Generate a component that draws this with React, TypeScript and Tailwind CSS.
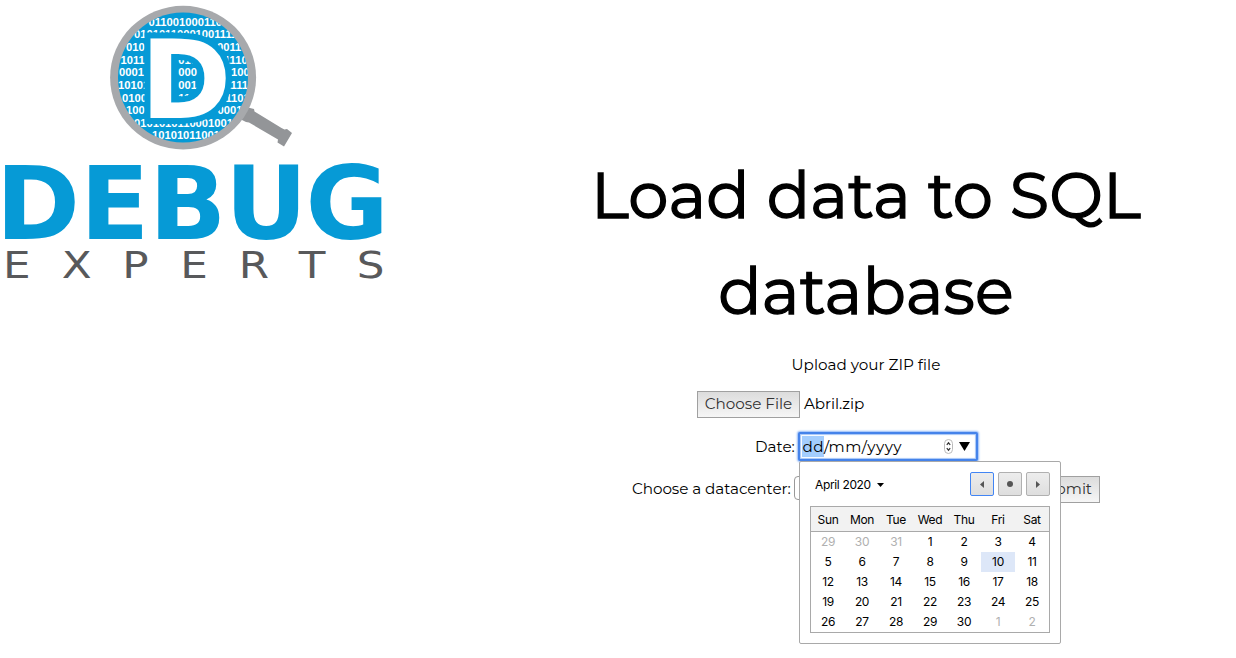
import React from "react";

const BODY = "font-['Montserrat','Inter',sans-serif]";

const BITS: [number, number, string][] = [
  [148.5, 25.5, "01100100011011"],
  [134, 38, "01010110001001111"],
  [126, 51, "010"],
  [120.5, 63.5, "1011"],
  [119, 76, "0001"],
  [118, 88.5, "10101"],
  [122, 101.5, "0100"],
  [126, 114, "100"],
  [134, 126.5, "010101011000100110"],
  [152, 139, "101010110010"],
  [178.3, 63.5, "010"],
  [178.3, 76, "000"],
  [178.3, 88.5, "001"],
  [178.3, 101.5, "110"],
  [217, 51, "0011"],
  [224, 63.5, "1110"],
  [231, 76, "1001"],
  [225, 88.5, "1111"],
  [225.5, 101.5, "1101"],
  [217.5, 114, "00010"],
];

function Logo() {
  return (
    <svg width="386" height="290" viewBox="0 0 386 290" role="img" aria-label="Debug Experts">
      <defs>
        <clipPath id="lens">
          <circle cx="183" cy="77.5" r="65" />
        </clipPath>
      </defs>
      <path d="M246 107 L254 109 L254.5 111.5 L281.5 128 L284.5 129.5 L287 129 L292 133 L284 146.5 L277.5 142.5 L278 139.5 L249 122.5 L246 122 L240 119 Z" fill="#939598" />
      <ellipse cx="183.1" cy="77.6" rx="73" ry="71.8" fill="#a7a9ac" />
      <circle cx="183" cy="77.5" r="65" fill="#069ad6" />
      <g
        clipPath="url(#lens)"
        fill="#fff"
        fontFamily="'Liberation Sans', sans-serif"
        fontWeight="700"
        fontSize="11.2"
      >
        {BITS.map(([x, y, s]) => (
          <text key={`${x}-${y}`} x={x} y={y}>
            {s}
          </text>
        ))}
      </g>
      <text
        x="140.5"
        y="118"
        fontFamily="'DejaVu Sans', sans-serif"
        fontWeight="700"
        fontSize="109.5"
        fill="#fff"
        stroke="#069ad6"
        strokeWidth="12"
        paintOrder="stroke"
      >
        D
      </text>
      <text
        x="-4.2 79.9 149 225 305.5"
        y="238.9"
        fontFamily="'DejaVu Sans', sans-serif"
        fontWeight="700"
        fontSize="101.5"
        fill="#069ad6"
      >
        DEBUG
      </text>
      <text
        transform="scale(1.15 1)"
        x="2.6 53.7 106.3 156.8 207.7 259.8 310.2"
        y="278.4"
        fontFamily="'DejaVu Sans', sans-serif"
        fontSize="38"
        fill="#58595b"
      >
        EXPERTS
      </text>
    </svg>
  );
}

const DAYS = ["Sun", "Mon", "Tue", "Wed", "Thu", "Fri", "Sat"];
const DATES = [
  29, 30, 31, 1, 2, 3, 4, 5, 6, 7, 8, 9, 10, 11, 12, 13, 14, 15, 16, 17, 18, 19, 20, 21, 22, 23, 24, 25, 26, 27,
  28, 29, 30, 1, 2,
];

function Calendar() {
  const nav = "flex h-6 w-6 items-center justify-center rounded-[2px] border bg-linear-to-b from-[#ededed] to-[#dedede]";
  return (
    <div className="absolute left-[1px] top-[29px] z-10 h-[183px] w-[262px] rounded-[2px] border border-[#a9a9a9] bg-white px-[10px] pt-[10px] font-['Inter',sans-serif] text-[12px] tracking-[-0.35px] text-black">
      <div className="flex h-6 items-center justify-between pl-[5px]">
        <div className="flex items-center gap-[6px] pt-px">
          <span>April 2020</span>
          <svg width="7" height="4" viewBox="0 0 7 4">
            <path d="M0 0H7L3.5 4Z" />
          </svg>
        </div>
        <div className="flex gap-1">
          <button className={`${nav} border-[#4285f4]`} aria-label="Previous month">
            <svg width="4" height="7" viewBox="0 0 4 7">
              <path d="M4 0V7L0 3.5Z" fill="#555" />
            </svg>
          </button>
          <button className={`${nav} border-[#b0b0b0]`} aria-label="Today">
            <svg width="6" height="6" viewBox="0 0 6 6">
              <circle cx="3" cy="3" r="3" fill="#555" />
            </svg>
          </button>
          <button className={`${nav} border-[#b0b0b0]`} aria-label="Next month">
            <svg width="4" height="7" viewBox="0 0 4 7">
              <path d="M0 0V7L4 3.5Z" fill="#555" />
            </svg>
          </button>
        </div>
      </div>
      <div className="mt-[10px] h-[127px] border border-[#a9a9a9]">
        <div className="grid h-[25px] grid-cols-7 border-b border-[#a9a9a9] bg-[#f2f2f2] text-center leading-[26px]">
          {DAYS.map((d) => (
            <span key={d}>{d}</span>
          ))}
        </div>
        <div className="grid grid-cols-7 text-center leading-5">
          {DATES.map((n, i) => (
            <span
              key={i}
              className={i < 3 || i > 32 ? "h-5 text-[#b0b0b0]" : i === 12 ? "h-5 bg-[#dde7f8]" : "h-5"}
            >
              {n}
            </span>
          ))}
        </div>
      </div>
    </div>
  );
}

export default function App() {
  const button = "h-[27px] border border-[#a0a0a0] bg-linear-to-b from-[#dcdcdc] to-[#f6f6f6] pb-px text-[#333]";
  return (
    <div className={`flex h-[658px] w-[1236px] overflow-hidden bg-white text-[15.2px] text-black ${BODY}`}>
      <div className="w-[496px] shrink-0">
        <Logo />
      </div>
      <main className="flex flex-1 flex-col items-center pt-[147px]">
        <h1 className="flex flex-col items-center text-[64px] font-normal leading-[96px] tracking-[0.13px] [-webkit-text-stroke:1.4px_black]">
          <span className="whitespace-nowrap">Load data to SQL</span>
          <span className="whitespace-nowrap">database</span>
        </h1>
        <p className="mt-[14px] h-6 whitespace-nowrap leading-6">Upload your ZIP file</p>
        <div className="mt-[14px] flex w-[338px] items-center gap-1">
          <button className={`${button} w-[103px] whitespace-nowrap`}>Choose File</button>
          <span className="pb-px tracking-[-0.05px]">Abril.zip</span>
        </div>
        <div className="mt-[14px] flex h-[29px] w-[224px] items-center justify-between">
          <label className="whitespace-nowrap pl-px pt-px">Date:</label>
          <div className="relative h-[29px] w-[180px] shrink-0 rounded-[2px] border-2 border-[#4583ea] bg-white shadow-[0_0_2px_1px_#8fb8f8,inset_0_0_1px_1px_#a5c5f7]">
            <div className="flex h-full items-center pl-[2px] pr-[6px]">
              <span className="h-[21px] w-[22px] bg-[#a3cdfe] pl-[0.5px] leading-[22px] tracking-[0.4px]">dd</span>
              <span className="pt-px tracking-[0.5px]">/mm/yyyy</span>
              <svg className="ml-auto" width="9" height="15" viewBox="0 0 9 15" fill="none">
                <rect x=".5" y=".5" width="8" height="14" rx="4" stroke="#bbb" />
                <path d="M2.8 5.8L4.5 3.8L6.2 5.8M2.8 9.2L4.5 11.2L6.2 9.2" stroke="#333" strokeWidth="1.2" />
              </svg>
              <svg className="ml-[6px]" width="11" height="9" viewBox="0 0 11 9">
                <path d="M0 0H11L5.5 9Z" />
              </svg>
            </div>
            <div className="absolute -left-[2px] -top-[2px]">
              <Calendar />
            </div>
          </div>
        </div>
        <div className="mt-[15px] flex h-[27px] w-[468px]">
          <label className="w-[162px] whitespace-nowrap leading-[26px] tracking-[-0.06px]">Choose a datacenter:</label>
          <div className="h-6 w-[220px] rounded-[4px] border border-[#999] bg-white" />
          <button className={`${button} ml-auto w-[72px]`}>Submit</button>
        </div>
      </main>
    </div>
  );
}
